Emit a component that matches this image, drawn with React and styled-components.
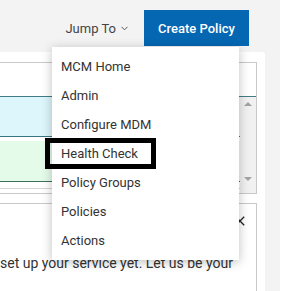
import React from "react";
import styled, { createGlobalStyle } from "styled-components";

const Global = createGlobalStyle`
  html, body { margin: 0; padding: 0; background: #ffffff; }
  body { font-family: Roboto, "Noto Sans", Arial, sans-serif; color: #333; }
  * { box-sizing: border-box; }
`;

const Screen = styled.div`
  display: flex;
  width: 305px;
  height: 291px;
  overflow: hidden;
  background: #ffffff;
`;

const Main = styled.div`
  width: 280px;
  display: flex;
  flex-direction: column;
  background: #f3f3f3;
`;

const Side = styled.div`
  flex: 1;
  background: #ffffff;
`;

const Header = styled.header`
  position: relative;
  height: 52px;
  display: flex;
  justify-content: flex-end;
  align-items: center;
  gap: 16px;
  padding: 10px 31px 6px 0;
`;

const JumpTo = styled.button`
  display: flex;
  align-items: center;
  gap: 5px;
  border: none;
  background: transparent;
  padding: 0;
  font: 400 13px Roboto, sans-serif;
  color: #444;
`;

const CreateButton = styled.button`
  width: 105px;
  height: 36px;
  border: none;
  background: #0566b2;
  color: #fff;
  font: 500 13px Roboto, sans-serif;
  padding: 0;
`;

const Menu = styled.ul`
  position: absolute;
  left: 52px;
  top: 47px;
  width: 187px;
  margin: 0;
  padding: 5px 0;
  list-style: none;
  background: #fff;
  box-shadow: 0 2px 10px rgba(0, 0, 0, 0.25);
  z-index: 5;
`;

const MenuItem = styled.li`
  position: relative;
  height: 29px;
  display: flex;
  align-items: center;
  padding-left: 9px;
  font-size: 13px;
  color: #333;
`;

const Highlight = styled.span`
  position: absolute;
  left: -7px;
  top: -1px;
  width: 111px;
  height: 31px;
  border: 5px solid #000;
`;

const Card = styled.section`
  flex: 1;
  width: 265px;
  display: flex;
  flex-direction: column;
  background: #fff;
  padding: 10px 8px 0 0;
  border-top-right-radius: 3px;
`;

const TableBox = styled.div`
  height: 132px;
  display: flex;
  flex-direction: column;
  border: 1px solid #c9c9c9;
  border-left: none;
`;

const HeadRow = styled.div`
  height: 34px;
  border-bottom: 1px solid #3f7d86;
`;

const Body = styled.div`
  flex: 1;
  display: flex;
`;

const Rows = styled.div`
  flex: 1;
  display: flex;
  flex-direction: column;
`;

const tones = {
  cyan: { bg: "#ddf6fb", line: "#3b7580" },
  green: { bg: "#e5fbea", line: "#3e6f5f" },
};

const DataRow = styled.div`
  height: ${(p) => p.$h}px;
  margin-bottom: ${(p) => p.$gap}px;
  background: ${(p) => tones[p.$tone].bg};
  border-bottom: 1px solid ${(p) => tones[p.$tone].line};
`;

const PlainRow = styled.div`
  margin-top: 6px;
  border-top: 1px solid #d5d5d5;
`;

const Scrollbar = styled.div`
  width: 16px;
  display: flex;
  flex-direction: column;
  justify-content: space-between;
  align-items: center;
  padding: 5px 0 12px;
  background: #f1f1f1;
`;

const Arrow = styled.span`
  width: 0;
  height: 0;
  border-left: 4px solid transparent;
  border-right: 4px solid transparent;
  ${(p) =>
    p.$down
      ? "border-top: 4px solid #a3a3a3;"
      : "border-bottom: 4px solid #a3a3a3;"}
`;

const NoticeBox = styled.div`
  flex: 1;
  margin-top: 9px;
  border: 1px solid #c9c9c9;
  border-left: none;
  border-bottom: none;
  display: flex;
  flex-direction: column;
`;

const CloseRow = styled.div`
  display: flex;
  justify-content: flex-end;
  padding: 12px 11px 0 0;
`;

const NoticeText = styled.p`
  margin: 27px 0 0;
  width: 240px;
  white-space: nowrap;
  overflow: hidden;
  font-size: 14px;
  line-height: 20px;
  color: #333;
`;

const items = [
  "MCM Home",
  "Admin",
  "Configure MDM",
  "Health Check",
  "Policy Groups",
  "Policies",
  "Actions",
];

export default function App() {
  return (
    <>
      <Global />
      <Screen>
        <Main>
          <Header>
            <JumpTo>
              Jump To
              <svg width="7" height="5" viewBox="0 0 7 5">
                <path d="M0.5 0.8 L3.5 3.8 L6.5 0.8" fill="none" stroke="#555" strokeWidth="1" />
              </svg>
            </JumpTo>
            <CreateButton>Create Policy</CreateButton>
            <Menu>
              {items.map((label) => (
                <MenuItem key={label}>
                  {label}
                  {label === "Health Check" && <Highlight />}
                </MenuItem>
              ))}
            </Menu>
          </Header>
          <Card>
            <TableBox>
              <HeadRow />
              <Body>
                <Rows>
                  <DataRow $tone="cyan" $h={40} $gap={4} />
                  <DataRow $tone="green" $h={41} $gap={0} />
                  <PlainRow />
                </Rows>
                <Scrollbar>
                  <Arrow />
                  <Arrow $down />
                </Scrollbar>
              </Body>
            </TableBox>
            <NoticeBox>
              <CloseRow>
                <svg width="10" height="10" viewBox="0 0 10 10">
                  <path d="M0.8 0.8 L9.2 9.2 M9.2 0.8 L0.8 9.2" stroke="#222" strokeWidth="1.3" fill="none" />
                </svg>
              </CloseRow>
              <NoticeText>set up your service yet. Let us be your</NoticeText>
            </NoticeBox>
          </Card>
        </Main>
        <Side />
      </Screen>
    </>
  );
}
